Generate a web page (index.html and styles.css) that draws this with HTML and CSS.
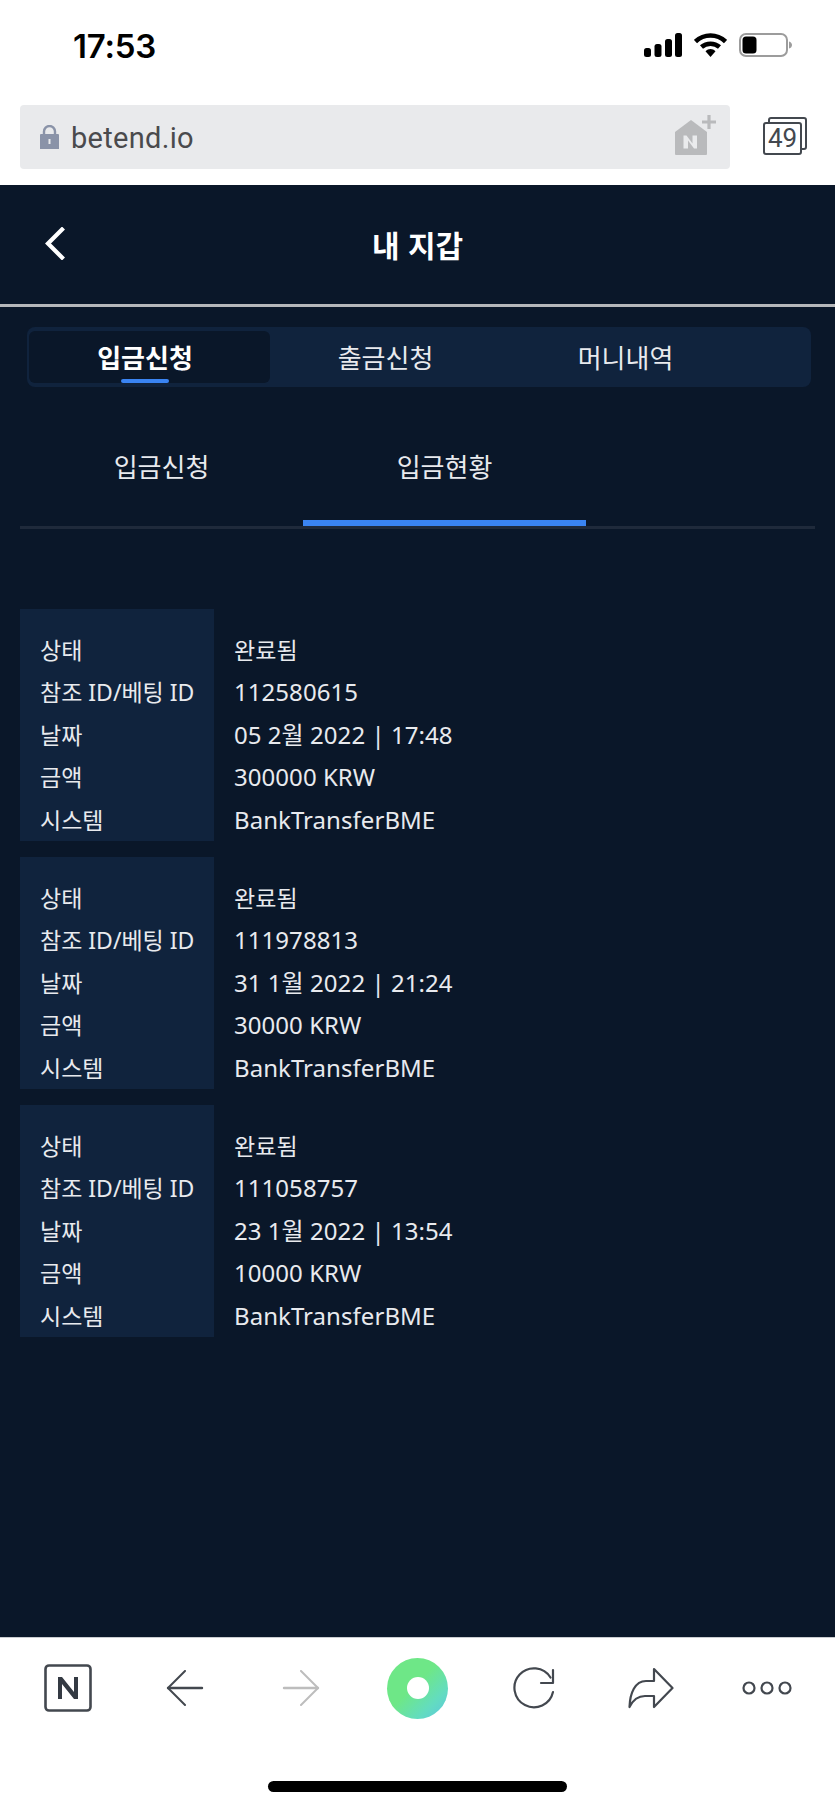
FILE: index.html
```html
<!DOCTYPE html>
<html lang="ko">
<head>
<meta charset="utf-8">
<title>내 지갑</title>
<link rel="stylesheet" href="styles.css">
</head>
<body>
<div class="page">
  <div class="status">
    <span class="time">17:53</span>
    <div class="status-icons">
      <svg class="i-signal" width="38" height="24" viewBox="0 0 38 24"><rect x="0" y="15" width="7" height="9" rx="2.5"/><rect x="10.5" y="11" width="7" height="13" rx="2.5"/><rect x="21" y="6" width="7" height="18" rx="2.5"/><rect x="31" y="0" width="7" height="24" rx="2.5"/></svg>
      <svg class="i-wifi" width="33" height="24" viewBox="0 0 33 24"><path d="M1.5 8.500C10 .5 23 .5 31.500 8.500" fill="none" stroke="#000" stroke-width="4.500"/><path d="M7.500 14C12.500 9.500 20.500 9.500 25.500 14" fill="none" stroke="#000" stroke-width="4.500"/><path d="M11.500 18.200C14.500 15.300 18.500 15.300 21.500 18.200L16.500 24Z"/></svg>
      <svg class="i-batt" width="53" height="24" viewBox="0 0 53 24"><rect x="1" y="1" width="47" height="22" rx="6" fill="none" stroke="#9c9c9c" stroke-width="2"/><rect x="3.500" y="3.500" width="14" height="17" rx="3.500" fill="#000"/><path d="M50 8.500c2 .5 3 2 3 3.500s-1 3-3 3.500z" fill="#9c9c9c"/></svg>
    </div>
  </div>

  <div class="urlrow">
    <div class="urlbar">
      <svg class="i-lock" width="19" height="24" viewBox="0 0 19 24"><path d="M4 10V6.500a5.500 5.500 0 0 1 11 0V10" fill="none" stroke="#8a93a8" stroke-width="2.400"/><path fill-rule="evenodd" d="M1 9h17a1 1 0 0 1 1 1v14H0V10a1 1 0 0 1 1-1zM8.500 14v5h2v-5z" fill="#8a93a8"/></svg>
      <span class="url">betend.io</span>
      <svg class="i-addhome" width="44" height="40" viewBox="0 0 44 40"><path d="M0 17 16 5 32 17V39a1 1 0 0 1-1 1H1a1 1 0 0 1-1-1Z" fill="#b9babc"/><path d="M8.500 33.500V20.500h3l6 8V20.500H22v13h-3l-6-8v8Z" fill="#eaebed"/><path d="M34 0v14M27 7h14" stroke="#b9babc" stroke-width="3.200" fill="none"/></svg>
    </div>
    <div class="tabs-count">
      <span class="tabs-back"></span>
      <span class="tabs-front">49</span>
    </div>
  </div>

  <main class="app">
    <header class="head">
      <svg class="i-chev" width="20" height="33" viewBox="0 0 20 33"><path d="M17 2.500 3 16.500 17 30.500" fill="none" stroke="#fff" stroke-width="4.200" stroke-linecap="square"/></svg>
      <h1 class="title">내 지갑</h1>
    </header>

    <nav class="segment">
      <a class="seg seg-on">입금신청</a>
      <a class="seg">출금신청</a>
      <a class="seg">머니내역</a>
    </nav>

    <nav class="subtabs">
      <a class="sub">입금신청</a>
      <a class="sub sub-on">입금현황</a>
    </nav>

    <section class="list">
      <div class="card">
        <div class="labels"><span>상태</span><span>참조 ID/베팅 ID</span><span>날짜</span><span>금액</span><span>시스템</span></div>
        <div class="values"><span class="ko">완료됨</span><span>112580615</span><span>05 2월 2022 | 17:48</span><span>300000 KRW</span><span>BankTransferBME</span></div>
      </div>
      <div class="card">
        <div class="labels"><span>상태</span><span>참조 ID/베팅 ID</span><span>날짜</span><span>금액</span><span>시스템</span></div>
        <div class="values"><span class="ko">완료됨</span><span>111978813</span><span>31 1월 2022 | 21:24</span><span>30000 KRW</span><span>BankTransferBME</span></div>
      </div>
      <div class="card">
        <div class="labels"><span>상태</span><span>참조 ID/베팅 ID</span><span>날짜</span><span>금액</span><span>시스템</span></div>
        <div class="values"><span class="ko">완료됨</span><span>111058757</span><span>23 1월 2022 | 13:54</span><span>10000 KRW</span><span>BankTransferBME</span></div>
      </div>
    </section>
  </main>

  <footer class="toolbar">
    <div class="tools">
      <svg width="48" height="48" viewBox="0 0 48 48"><rect x="1.500" y="1.500" width="45" height="45" rx="3.500" fill="none" stroke="#43484f" stroke-width="2.600"/><path d="M14 35V13h4l12 15V13h4v22h-4L18 20v15Z" fill="#343a43"/></svg>
      <svg width="38" height="36" viewBox="0 0 38 36"><path d="M19 1 2 18 19 35" fill="none" stroke="#43484f" stroke-width="2" stroke-linecap="round" stroke-linejoin="round"/><path d="M2 18H36" stroke="#43484f" stroke-width="2.400" stroke-linecap="round"/></svg>
      <svg width="38" height="36" viewBox="0 0 38 36"><path d="M19 1 36 18 19 35" fill="none" stroke="#bdbdbd" stroke-width="2" stroke-linecap="round" stroke-linejoin="round"/><path d="M2 18H36" stroke="#bdbdbd" stroke-width="2.400" stroke-linecap="round"/></svg>
      <span class="orb"><span class="orb-hole"></span></span>
      <svg width="42" height="42" viewBox="0 0 42 42"><path d="M40 25A19.500 19.500 0 1 1 37.500 10.500" fill="none" stroke="#43484f" stroke-width="2.200" stroke-linecap="round"/><path d="M40 3V16H28" fill="none" stroke="#43484f" stroke-width="2.200" stroke-linecap="round" stroke-linejoin="round"/></svg>
      <svg width="46" height="42" viewBox="0 0 46 42"><path d="M26 2 44.500 21 26 40V29H17C10 29 5 33 1.500 40 2 26 7 14 18 14H26Z" fill="none" stroke="#43484f" stroke-width="2.200" stroke-linejoin="round"/></svg>
      <svg width="50" height="14" viewBox="0 0 50 14"><circle cx="7" cy="7" r="5.500" fill="none" stroke="#43484f" stroke-width="2.200"/><circle cx="25" cy="7" r="5.500" fill="none" stroke="#43484f" stroke-width="2.200"/><circle cx="43" cy="7" r="5.500" fill="none" stroke="#43484f" stroke-width="2.200"/></svg>
    </div>
    <span class="homebar"></span>
  </footer>
</div>
</body>
</html>
```
FILE: styles.css
```css
* { box-sizing: border-box; }
html, body { margin: 0; padding: 0; background: #fff; }
body { font-family: "Noto Sans", "Noto Sans CJK KR", sans-serif; }
.page { width: 835px; height: 1807px; display: flex; flex-direction: column; overflow: hidden; }

.status { height: 88px; flex: none; display: flex; justify-content: space-between; align-items: flex-start; padding: 33px 43px 0 73px; }
.time { font-family: Inter, "Liberation Sans", sans-serif; font-weight: 600; font-size: 33px; line-height: 26px; letter-spacing: -0.2px; color: #000; }
.status-icons { display: flex; align-items: center; gap: 12px; }

.urlrow { height: 97px; flex: none; display: flex; align-items: flex-start; padding: 17px 28px 0 20px; }
.urlbar { width: 710px; height: 64px; background: #e9eaec; border-radius: 4px; display: flex; align-items: center; padding-left: 20px; }
.i-lock { flex: none; }
.url { font-family: Roboto, "Liberation Sans", sans-serif; font-size: 29px; color: #4a4a4d; margin: 2px 0 0 12px; flex: 1; letter-spacing: 0.3px; }
.i-addhome { flex: none; margin: 0 11px 4px 0; }
.tabs-count { position: relative; width: 44px; height: 38px; margin: 12px 0 0 33px; }
.tabs-back { position: absolute; right: 0; top: 0; width: 39px; height: 33px; border: 2px solid #43484f; border-radius: 3px; }
.tabs-front { position: absolute; left: 0; bottom: 0; width: 39px; height: 33px; background: #fff; border: 2px solid #43484f; border-radius: 3px; font-family: Roboto, sans-serif; font-size: 26px; line-height: 29px; text-align: center; color: #43484f; }

.app { flex: 1; background: #0a1729; display: flex; flex-direction: column; color: #e8eaee; }
.head { height: 122px; flex: none; border-bottom: 3px solid #b5b7ba; display: flex; align-items: center; justify-content: center; position: relative; padding-bottom: 2px; }
.i-chev { position: absolute; left: 45px; top: 42px; }
.title { margin: 0; font-size: 30px; line-height: 40px; font-weight: 700; color: #fff; font-family: "Noto Sans CJK KR", sans-serif; }

.segment { margin: 20px 24px 0 27px; height: 60px; background: #10233d; border-radius: 8px; padding: 4px 2px; display: flex; flex: none; }
.seg { position: relative; width: 240px; display: flex; align-items: center; justify-content: center; font-size: 26px; font-family: "Noto Sans CJK KR", sans-serif; color: #e8eaee; padding: 0 9px 2px 0; border-radius: 6px; }
.seg-on { background: #0a1729; color: #fff; font-weight: 700; width: 241px; }
.seg-on::after { content: ""; position: absolute; left: 92px; bottom: 0; width: 48px; height: 4px; border-radius: 2px; background: #3a84f2; }

.subtabs { margin: 0 20px; height: 142px; flex: none; display: flex; border-bottom: 3px solid #1f2a3b; }
.sub { width: 283px; display: flex; justify-content: center; padding-top: 59px; font-size: 26px; line-height: 40px; font-family: "Noto Sans CJK KR", sans-serif; color: #e8eaee; position: relative; margin-bottom: -3px; }
.sub-on { border-bottom: 6px solid #3a84f2; height: 139px; }

.list { padding: 80px 0 0 20px; display: flex; flex-direction: column; gap: 16px; }
.card { display: flex; height: 232px; line-height: 42.4px; }
.labels { width: 194px; background: #10233d; padding: 20px 0 0 20px; display: flex; flex-direction: column; font-size: 23px; }
.values { padding: 20px 0 0 20px; display: flex; flex-direction: column; font-size: 24px; letter-spacing: 0.05px; }
.ko { font-size: 23px; }

.toolbar { height: 170px; flex: none; background: #fff; position: relative; border-top: 1px solid #c9ccd0; display: flex; flex-direction: column; align-items: center; }
.tools { width: 100%; height: 100px; padding-left: 10px; display: grid; grid-template-columns: repeat(7, 116.5px); align-items: center; justify-items: center; }
.orb { width: 61px; height: 61px; border-radius: 50%; background: linear-gradient(135deg, #6ee787 45%, #63dcc0 75%, #5cc5e2 100%); display: flex; align-items: center; justify-content: center; }
.orb-hole { width: 22px; height: 22px; border-radius: 50%; background: #fff; }
.homebar { width: 299px; height: 11px; background: #000; border-radius: 6px; margin-top: 43px; }
```
